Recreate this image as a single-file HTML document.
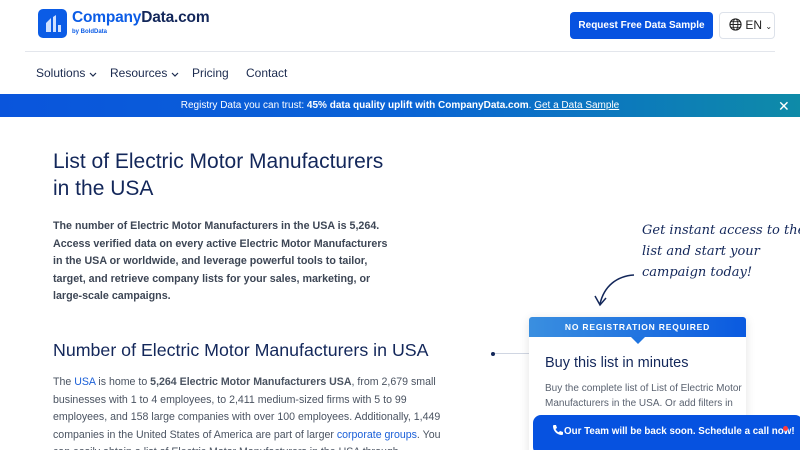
<!DOCTYPE html>
<html><head><meta charset="utf-8"><style>
*{margin:0;padding:0;box-sizing:border-box}
html,body{width:800px;height:450px;overflow:hidden}
body{background:#fff;font-family:"Liberation Sans",sans-serif;position:relative;color:#1b2a4e}
.abs{position:absolute}
</style></head><body>
<div class="abs" style="left:38px;top:9px;width:29px;height:29px;background:#0b5ce6;border-radius:5px">
<svg width="29" height="29" viewBox="0 0 29 29"><path d="M8 23V14l5-5v14z M15 23V8l3-2v17z M20 23v-7h3v7z" fill="#cfe0ff"/></svg></div>
<div class="abs" style="left:72px;top:9px;font-size:15.5px;font-weight:bold;color:#0b5ce6;letter-spacing:-0.2px">Company<span style="color:#13275a">Data.com</span></div>
<div class="abs" style="left:72px;top:29px;font-size:6px;font-weight:bold;color:#0b5ce6">by BoldData</div>
<div class="abs" style="left:570px;top:12px;width:143px;height:27px;background:#0652e0;border-radius:4px;color:#fff;font-size:10px;font-weight:bold;text-align:center;line-height:27px">Request Free Data Sample</div>
<div class="abs" style="left:719px;top:12px;width:56px;height:27px;border:1px solid #dde2ea;border-radius:4px;font-size:12px;line-height:25px;padding-left:9px;color:#222">
<svg width="13" height="13" viewBox="0 0 14 14" style="vertical-align:-2px"><circle cx="7" cy="7" r="6" fill="none" stroke="#222" stroke-width="1.2"/><ellipse cx="7" cy="7" rx="2.6" ry="6" fill="none" stroke="#222"/><path d="M1 7h12M2 4h10M2 10h10" stroke="#222"/></svg> EN <span style="font-size:8px">⌄</span></div>
<div class="abs" style="left:25px;top:51px;width:750px;height:1px;background:#e3e6ec"></div>
<div class="abs" style="left:36px;top:66px;font-size:12px">Solutions <svg width="8" height="5" viewBox="0 0 8 5"><path d="M1 1l3 3 3-3" fill="none" stroke="#1b2a4e" stroke-width="1.2"/></svg></div>
<div class="abs" style="left:110px;top:66px;font-size:12px">Resources <svg width="8" height="5" viewBox="0 0 8 5"><path d="M1 1l3 3 3-3" fill="none" stroke="#1b2a4e" stroke-width="1.2"/></svg></div>
<div class="abs" style="left:192px;top:66px;font-size:12px">Pricing</div>
<div class="abs" style="left:246px;top:66px;font-size:12px">Contact</div>
<div class="abs" style="left:0;top:94px;width:800px;height:23px;background:linear-gradient(90deg,#0a55dc 0%,#0a63d6 50%,#0e8ba8 100%);color:#fff;font-size:10px;line-height:23px;text-align:center">Registry Data you can trust: <b>45% data quality uplift with CompanyData.com</b>. <u>Get a Data Sample</u></div>
<div class="abs" style="left:778px;top:98px;color:#fff;font-size:14px">✕</div>
<div class="abs" style="left:53px;top:148px;font-size:21px;line-height:27px;color:#13275a;width:340px">List of Electric Motor Manufacturers in the USA</div>
<div class="abs" style="left:53px;top:218px;width:336px;font-size:10.7px;line-height:17.5px;font-weight:bold;color:#3d4655">The number of Electric Motor Manufacturers in the USA is 5,264. Access verified data on every active Electric Motor Manufacturers in the USA or worldwide, and leverage powerful tools to tailor, target, and retrieve company lists for your sales, marketing, or large-scale campaigns.</div>
<div class="abs" style="left:53px;top:340px;font-size:17.8px;color:#13275a;white-space:nowrap">Number of Electric Motor Manufacturers in USA</div>
<div class="abs" style="left:53px;top:374px;width:392px;font-size:10.6px;line-height:17.6px;color:#4a5361">The <span style="color:#1a5fd8">USA</span> is home to <b>5,264 Electric Motor Manufacturers USA</b>, from 2,679 small businesses with 1 to 4 employees, to 2,411 medium-sized firms with 5 to 99 employees, and 158 large companies with over 100 employees. Additionally, 1,449 companies in the United States of America are part of larger <span style="color:#1a5fd8">corporate groups</span>. You can easily obtain a list of Electric Motor Manufacturers in the USA through</div>
<div class="abs" style="left:642px;top:220px;font-family:'DejaVu Serif',serif;font-style:italic;font-size:13px;line-height:21px;color:#13275a;white-space:nowrap">Get instant access to the<br>list and start your<br>campaign today!</div>
<svg class="abs" style="left:592px;top:270px" width="45" height="40" viewBox="0 0 45 40"><path d="M42 5C25 6 12 16 8 34" fill="none" stroke="#13275a" stroke-width="1.5"/><path d="M3 26l5 9 6-7" fill="none" stroke="#13275a" stroke-width="1.5"/></svg>
<div class="abs" style="left:491px;top:352px;width:4px;height:4px;border-radius:2px;background:#13275a"></div>
<div class="abs" style="left:495px;top:353px;width:35px;height:1px;background:#d0d6e2"></div>
<div class="abs" style="left:529px;top:317px;width:217px;height:140px;background:#fff;box-shadow:0 2px 10px rgba(0,0,0,.12);border-radius:3px"></div>
<div class="abs" style="left:529px;top:317px;width:217px;height:20px;background:linear-gradient(90deg,#3a8fe0,#0a5ae0);border-radius:3px 3px 0 0;color:#fff;font-size:8.5px;font-weight:bold;letter-spacing:.8px;text-align:center;line-height:20px">NO REGISTRATION REQUIRED</div>
<div class="abs" style="left:631px;top:337px;width:0;height:0;border-left:7px solid transparent;border-right:7px solid transparent;border-top:7px solid #1f74e0"></div>
<div class="abs" style="left:545px;top:355px;font-size:14.5px;color:#13275a">Buy this list in minutes</div>
<div class="abs" style="left:545px;top:381px;width:200px;font-size:10px;line-height:15px;color:#5a6270">Buy the complete list of List of Electric Motor Manufacturers in the USA. Or add filters in</div>
<div class="abs" style="left:533px;top:415px;width:270px;height:40px;background:#0652e0;border-radius:8px;color:#fff;font-size:9.8px;font-weight:bold;line-height:34px;padding-left:19px;white-space:nowrap"><svg width="12" height="12" viewBox="0 0 12 12" style="vertical-align:-2px"><path d="M2 1l2 0 1 3-1.5 1c.7 1.5 1.8 2.6 3.3 3.3L8 7l3 1v2c0 .6-.5 1-1 1C5 11 1 7 1 2c0-.5.4-1 1-1z" fill="#fff"/></svg>Our Team will be back soon. Schedule a call now!</div>
<div class="abs" style="left:783px;top:426px;width:5px;height:5px;border-radius:3px;background:#ff3b3b"></div>
</body></html>
